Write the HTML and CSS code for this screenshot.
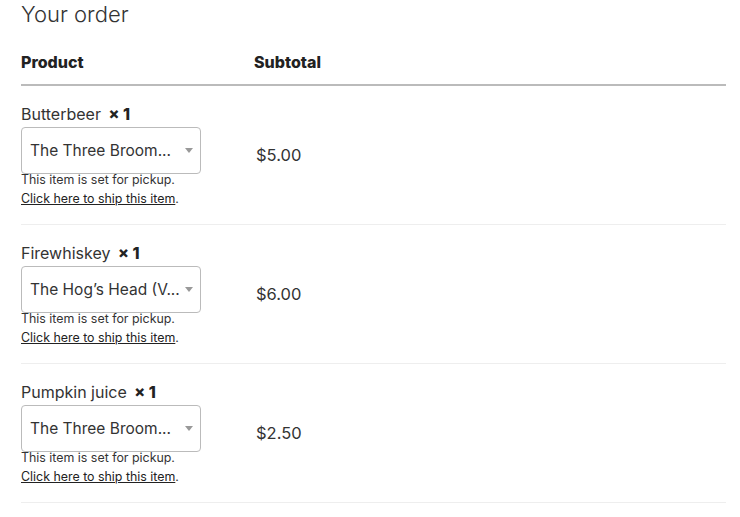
FILE: index.html
```html
<!DOCTYPE html>
<html lang="en">
<head>
    <meta charset="UTF-8">
    <meta name="viewport" content="width=device-width, initial-scale=1.0">
    <title>Your order</title>
    <link rel="stylesheet" href="styles.css">
</head>
<body>
    <div class="order">
        <h3 class="order-title">Your order</h3>
        <table class="order-table">
            <thead>
                <tr>
                    <th class="col-product">Product</th>
                    <th class="col-total">Subtotal</th>
                </tr>
            </thead>
            <tbody>
                <tr>
                    <td class="col-product">
                        <div class="item-name">Butterbeer <strong class="qty">&times;&nbsp;1</strong></div>
                        <div class="pickup-select">
                            <span class="pickup-value">The Three Broom...</span>
                            <span class="arrow"></span>
                        </div>
                        <p class="pickup-note">This item is set for pickup.<br><a href="#">Click here to ship this item</a>.</p>
                    </td>
                    <td class="col-total">$5.00</td>
                </tr>
                <tr>
                    <td class="col-product">
                        <div class="item-name">Firewhiskey <strong class="qty">&times;&nbsp;1</strong></div>
                        <div class="pickup-select">
                            <span class="pickup-value">The Hog&rsquo;s Head (V...</span>
                            <span class="arrow"></span>
                        </div>
                        <p class="pickup-note">This item is set for pickup.<br><a href="#">Click here to ship this item</a>.</p>
                    </td>
                    <td class="col-total">$6.00</td>
                </tr>
                <tr>
                    <td class="col-product">
                        <div class="item-name">Pumpkin juice <strong class="qty">&times;&nbsp;1</strong></div>
                        <div class="pickup-select">
                            <span class="pickup-value">The Three Broom...</span>
                            <span class="arrow"></span>
                        </div>
                        <p class="pickup-note">This item is set for pickup.<br><a href="#">Click here to ship this item</a>.</p>
                    </td>
                    <td class="col-total">$2.50</td>
                </tr>
            </tbody>
        </table>
    </div>
</body>
</html>
```

FILE: styles.css
```css
body {
    font-family: "Inter", "Liberation Sans", sans-serif;
    margin: 0;
    padding: 0;
    background-color: #fff;
    color: #333;
}

.order {
    width: 705px;
    margin: 0 0 0 21px;
}

.order-title {
    font-size: 22px;
    font-weight: 300;
    line-height: 28px;
    margin: 0;
    color: #333;
}

.order-table {
    width: 100%;
    border-collapse: collapse;
    margin-top: 24px;
}

.order-table th {
    font-size: 16px;
    font-weight: 800;
    color: #222;
    text-align: left;
    padding: 0 0 12px;
    line-height: 20px;
    border-bottom: 2px solid #bbb;
}

.order-table td {
    border-bottom: 1px solid #eee;
    padding: 16px 0 16px;
    vertical-align: middle;
    font-size: 16px;
}

.col-product {
    width: 233px;
}

.order-table td.col-total {
    padding-left: 2px;
    font-size: 16.5px;
}

.item-name {
    line-height: 24px;
    color: #333;
}

.qty {
    font-weight: 800;
    color: #222;
    margin-left: 3px;
}

.pickup-select {
    width: 180px;
    height: 47px;
    box-sizing: border-box;
    margin-top: 1px;
    border: 1px solid #bbb;
    border-radius: 4px;
    display: flex;
    align-items: center;
    padding: 0 7px 0 8px;
}

.pickup-value {
    flex: 1;
    white-space: nowrap;
    font-size: 15.5px;
    color: #333;
}

.arrow {
    width: 0;
    height: 0;
    border-left: 4px solid transparent;
    border-right: 4px solid transparent;
    border-top: 5px solid #999;
}

.pickup-note {
    margin: -4px 0 0;
    font-size: 12.4px;
    line-height: 19px;
    color: #333;
}

.pickup-note a {
    color: #222;
    text-decoration: underline;
}
```
